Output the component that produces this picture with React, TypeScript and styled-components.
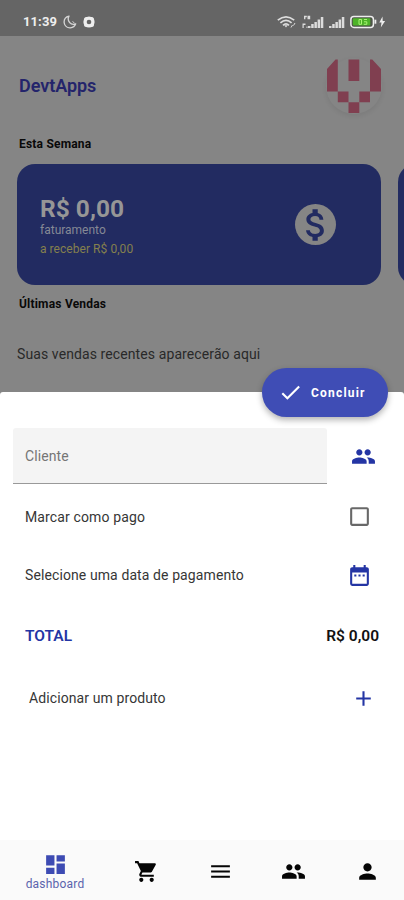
import React from 'react';
import styled, { createGlobalStyle } from 'styled-components';
import {
  MdAdd, MdAttachMoney, MdCheck, MdCheckBoxOutlineBlank, MdDashboard, MdDateRange,
  MdMenu, MdPeople, MdPerson, MdShoppingCart,
} from 'react-icons/md';

const GlobalStyle = createGlobalStyle`
  * { box-sizing: border-box; }
  body { margin: 0; background: #fff; font-family: Roboto, "Liberation Sans", sans-serif; }
  svg { display: block; flex: none; }
`;

const Screen = styled.div`
  width: 404px;
  height: 900px;
  overflow: hidden;
  display: flex;
  flex-direction: column;
  background: #858585;
`;

const Label = styled.span<{ $size: number; $color: string; $weight?: number; $spacing?: number; $line?: number }>`
  font-size: ${p => p.$size}px;
  line-height: ${p => p.$line ?? 20}px;
  color: ${p => p.$color};
  font-weight: ${p => p.$weight ?? 400};
  letter-spacing: ${p => p.$spacing ?? 0}px;
  white-space: nowrap;
`;

const StatusBar = styled.div`
  height: 36px;
  flex: none;
  padding: 8px 18px 0 23px;
  display: flex;
  justify-content: space-between;
  background: #656565;
`;

const StatusGroup = styled.div<{ $gap: number }>`
  height: 28px;
  display: flex;
  align-items: center;
  gap: ${p => p.$gap}px;
`;

const Header = styled.header`
  height: 100px;
  flex: none;
  display: flex;
  align-items: center;
  justify-content: space-between;
  padding: 0 22px 0 19px;
`;

const Avatar = styled.div`
  width: 56px;
  height: 56px;
  margin-bottom: 1px;
  border-radius: 50%;
  box-shadow: 0 2px 5px rgba(0, 0, 0, 0.08);
`;

const SectionTitle = styled.h2<{ $height: number; $top?: number; $spacing: number }>`
  height: ${p => p.$height}px;
  flex: none;
  margin: 0;
  padding: ${p => p.$top ?? 0}px 0 0 19px;
  font-size: 12px;
  line-height: 17px;
  font-weight: 700;
  letter-spacing: ${p => p.$spacing}px;
  color: #090909;
`;

const Carousel = styled.div`
  flex: none;
  display: flex;
  gap: 17px;
  padding-left: 17px;
`;

const Card = styled.article`
  width: 364px;
  height: 121px;
  flex: none;
  display: flex;
  align-items: center;
  justify-content: space-between;
  padding: 0 45px 0 23px;
  border-radius: 18px;
  background: #222b61;
`;

const CardText = styled.div`
  display: flex;
  flex-direction: column;
  padding-top: 5px;
`;

const Coin = styled.div`
  width: 41px;
  height: 41px;
  display: flex;
  align-items: center;
  justify-content: center;
  border-radius: 50%;
  background: #858585;
  color: #222b61;
`;

const EmptyNote = styled.div`
  height: 82px;
  flex: none;
  padding: 34px 0 0 17px;
`;

const Sheet = styled.section`
  flex: 1;
  display: flex;
  flex-direction: column;
  border-radius: 3px 3px 0 0;
  background: #fff;
`;

const ConfirmButton = styled.button`
  width: 126px;
  height: 49px;
  flex: none;
  align-self: flex-end;
  margin: -24px 16px 11px 0;
  padding: 0 0 0 16px;
  display: flex;
  align-items: center;
  gap: 8px;
  border: 0;
  border-radius: 25px;
  background: #3f4db5;
  color: #fff;
  font-family: inherit;
  box-shadow: 0 3px 6px rgba(0, 0, 0, 0.3);
`;

const Field = styled.div`
  display: flex;
  align-items: center;
  justify-content: space-between;
  padding: 0 28px 0 13px;
`;

const Input = styled.div`
  width: 314px;
  height: 56px;
  display: flex;
  align-items: center;
  padding-left: 12px;
  border-radius: 3px 3px 0 0;
  border-bottom: 1px solid #999;
  background: #f4f4f4;
`;

const Row = styled.div<{ $height: number; $left?: number; $right: number }>`
  height: ${p => p.$height}px;
  flex: none;
  display: flex;
  align-items: center;
  justify-content: space-between;
  padding: 0 ${p => p.$right}px 0 ${p => p.$left ?? 25}px;
`;

const Tint = styled.span<{ $color: string }>`
  display: flex;
  color: ${p => p.$color};
`;

const BottomNav = styled.nav`
  height: 60px;
  flex: none;
  margin-top: auto;
  display: flex;
  background: #fafafa;
`;

const NavItem = styled.div<{ $active?: boolean }>`
  flex: ${p => (p.$active ? '0 0 110px' : '1')};
  display: flex;
  flex-direction: column;
  align-items: center;
  padding-top: ${p => (p.$active ? 12 : 19)}px;
  color: ${p => (p.$active ? '#3d4bb3' : '#050505')};
`;

const BLUE = '#2435a4';

const Moon = () => (
  <svg width="14" height="14" viewBox="0 0 14 14" fill="none" stroke="#d5d5d5" strokeWidth="1.3" strokeLinejoin="round">
    <path d="M6 1.1C2.7 1.9 .8 4.6 1.2 7.8 1.7 11 4.3 13 7.3 12.8 9.8 12.6 12 11 12.7 8.8 10.5 9.7 8.1 9.2 6.6 7.5 5 5.6 4.9 3.1 6 1.1Z" />
    <path d="M9.500 6.500l2 1.500" strokeWidth="1" />
  </svg>
);

const Gear = () => (
  <svg width="12" height="12" viewBox="0 0 12 12">
    <rect x="1" y="1" width="10" height="10" rx="2.5" fill="#eee" />
    <circle cx="6" cy="6" r="5.6" fill="#eee" />
    <circle cx="6" cy="6" r="2.3" fill="#656565" />
  </svg>
);

const Wifi = () => (
  <svg width="20" height="14" viewBox="0 0 20 14" fill="none" stroke="#ddd" strokeWidth="1.7">
    <path d="M.8 5.2Q9 -1.500 17.200 5.200M3.400 7.800Q9 3 14.600 7.800M6 10.300Q9 7.500 12 10.300" />
    <path d="M7.200 10.300h3.600L9 12.500Z" fill="#ddd" stroke="none" />
    <path d="M14 12.500l1.500-2.500M16.500 10.500L18 8" strokeWidth="1" />
  </svg>
);

const Signal = ({ data }: { data?: boolean }) => (
  <svg width={data ? 22 : 16} height="14" viewBox={data ? '-6 0 22 14' : '0 0 16 14'} fill="#dcdcdc">
    <path d="M0 11h2.500v2H0zM3.200 9h2.500v4H3.200zM6.400 7h2.500v6H6.400zM9.600 4.500h2.500V13H9.600zM12.800 2h2.500v11h-2.500z" />
    {data && <path d="M-4 .8h2.800v1.500H-2.600v2H-4zM-.5 .8h2.700v3.500H-.5zM-5.500 8.500h3V10h-1.800v3h-1.200zM-1.500 11.500h1v1.500h-1z" />}
  </svg>
);

const Battery = () => (
  <svg width="36" height="14" viewBox="0 0 36 14">
    <rect x=".9" y="1.4" width="22.5" height="11" rx="3" fill="#4d5348" stroke="#eee" strokeWidth="1.5" />
    <rect x="2.8" y="3.2" width="17.5" height="7.4" rx="1" fill="#4db328" />
    <path d="M9 4.500h2.500v4.800H9zM14 4.500h3M14 6.800h2.800v2.500h-3" fill="none" stroke="#a8f574" strokeWidth="1" />
    <path d="M24.500 4.700h1.800v4h-1.800z" fill="#eee" />
    <path d="M32.500 1.500L29.300 7.500h2.200l-.7 5 4.300-6.600h-2.400z" fill="#eee" />
  </svg>
);

const Logo = () => (
  <svg width="56" height="56" viewBox="0 0 56 56" fill="#803f50">
    <path d="M1 11L9.500 1.500h2.300V33.500H1zM22.500 1.500h10.800V23H22.500zM44 1.500h2.300L55 11v22.500H44zM11.800 33.500h10.700v10.700H11.800zM33.300 33.500H44v10.700H33.300zM22.500 44.200h10.800V55H22.500z" />
  </svg>
);

export default function App() {
  return (
    <>
      <GlobalStyle />
      <Screen>
        <StatusBar>
          <StatusGroup $gap={6}>
            <Label $size={13} $weight={700} $color="#eee" $spacing={0.1}>11:39</Label>
            <Moon />
            <Gear />
          </StatusGroup>
          <StatusGroup $gap={5}>
            <Wifi />
            <Signal data />
            <Signal />
            <Battery />
          </StatusGroup>
        </StatusBar>
        <Header>
          <Label $size={18} $weight={600} $color="#24246b" $spacing={-0.05}>DevtApps</Label>
          <Avatar><Logo /></Avatar>
        </Header>
        <SectionTitle $height={28} $spacing={0.2}>Esta Semana</SectionTitle>
        <Carousel>
          <Card>
            <CardText>
              <Label $size={24.5} $line={27} $weight={700} $color="#969696">R$ 0,00</Label>
              <Label $size={12} $line={17} $color="#858995">faturamento</Label>
              <Label $size={12} $line={20} $color="#85804d" $spacing={0.05}>a receber R$ 0,00</Label>
            </CardText>
            <Coin><MdAttachMoney size={42} /></Coin>
          </Card>
          <Card />
        </Carousel>
        <SectionTitle $height={25} $top={11} $spacing={0.2}>Últimas Vendas</SectionTitle>
        <EmptyNote>
          <Label $size={14} $line={18} $color="#292929" $spacing={0.1}>Suas vendas recentes aparecerão aqui</Label>
        </EmptyNote>
        <Sheet>
          <ConfirmButton>
            <MdCheck size={25} />
            <Label $size={12} $weight={700} $color="#fff" $spacing={1.2}>Concluir</Label>
          </ConfirmButton>
          <Field>
            <Input><Label $size={14} $color="#757575" $spacing={0.1}>Cliente</Label></Input>
            <Tint $color={BLUE}><MdPeople size={25} /></Tint>
          </Field>
          <Row $height={65} $right={32}>
            <Label $size={14} $color="#363636" $spacing={0.13}>Marcar como pago</Label>
            <Tint $color="#686868"><MdCheckBoxOutlineBlank size={25} /></Tint>
          </Row>
          <Row $height={52} $right={32}>
            <Label $size={14} $color="#363636" $spacing={0.1}>Selecione uma data de pagamento</Label>
            <Tint $color={BLUE}><MdDateRange size={25} /></Tint>
          </Row>
          <Row $height={69} $right={25}>
            <Label $size={15.5} $weight={600} $color={BLUE}>TOTAL</Label>
            <Label $size={15.5} $weight={600} $color="#111">R$ 0,00</Label>
          </Row>
          <Row $height={56} $left={29} $right={28}>
            <Label $size={14} $color="#363636" $spacing={0.1}>Adicionar um produto</Label>
            <Tint $color={BLUE}><MdAdd size={25} /></Tint>
          </Row>
          <BottomNav>
            <NavItem $active>
              <MdDashboard size={25} />
              <Label $size={12} $line={14} $color="#5a64ad" $spacing={0.2}>dashboard</Label>
            </NavItem>
            <NavItem><MdShoppingCart size={25} /></NavItem>
            <NavItem><MdMenu size={25} /></NavItem>
            <NavItem><MdPeople size={25} /></NavItem>
            <NavItem><MdPerson size={25} /></NavItem>
          </BottomNav>
        </Sheet>
      </Screen>
    </>
  );
}
